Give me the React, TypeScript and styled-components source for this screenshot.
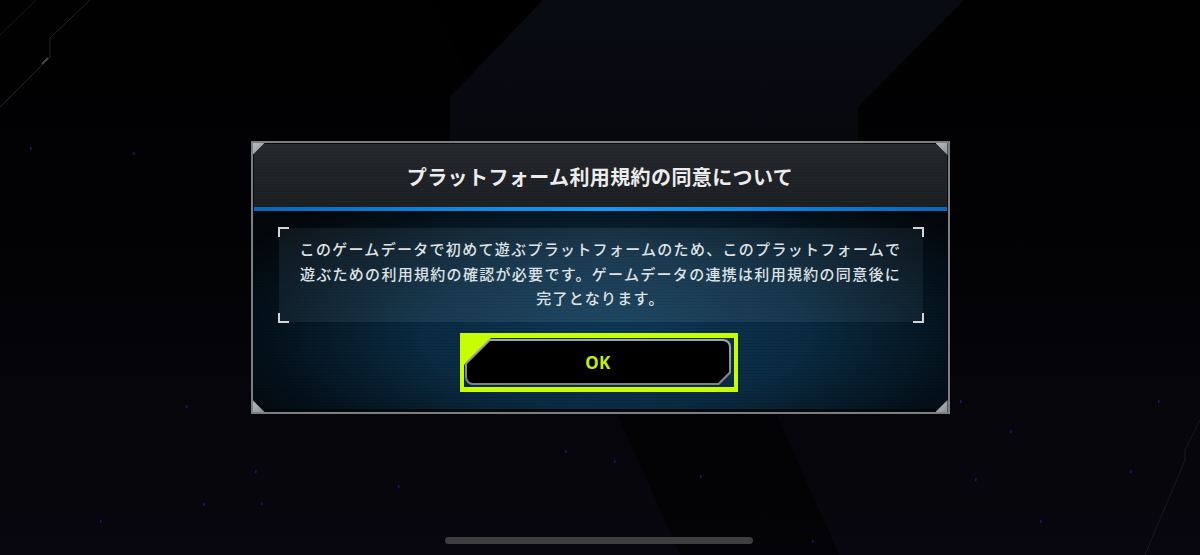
import React from 'react'
import styled, { createGlobalStyle } from 'styled-components'

const GlobalStyle = createGlobalStyle`
  html, body {
    margin: 0;
    padding: 0;
    background: #020203;
  }
  #root {
    width: 1200px;
    height: 555px;
  }
`

const Screen = styled.div`
  position: relative;
  width: 1200px;
  height: 555px;
  overflow: hidden;
  background:
    linear-gradient(66deg, transparent 0 47%, rgba(0, 0, 0, 0.55) 47% 58%, transparent 58% 100%),
    linear-gradient(180deg, #010102 0%, #020204 40%, #08070f 100%);
  display: flex;
  align-items: center;
  justify-content: center;
  font-family: 'Noto Sans CJK JP', 'Noto Sans', sans-serif;

  &::before {
    content: '';
    position: absolute;
    left: 0;
    top: 0;
    width: 1200px;
    height: 160px;
    background: linear-gradient(180deg, #090b12 0%, #07080e 100%);
    clip-path: polygon(543px 0, 964px 0, 858px 107px, 858px 160px, 450px 160px, 450px 97px);
  }
`

const Backdrop = styled.svg`
  position: absolute;
  inset: 0;
  pointer-events: none;
`

const Panel = styled.div`
  position: relative;
  z-index: 1;
  width: 695px;
  height: 269px;
  border: 2px solid #7c7f82;
  box-shadow: inset 0 0 0 1px #0a0b0c;
  display: flex;
  flex-direction: column;
  background: #02070b;
`

const Corner = styled.span<{ $v: 'top' | 'bottom'; $h: 'left' | 'right' }>`
  position: absolute;
  z-index: 3;
  width: 12px;
  height: 12px;
  ${(p) => p.$v}: 0;
  ${(p) => p.$h}: 0;
  background: linear-gradient(135deg, #b9bcbf, #8e9194);
  clip-path: ${(p) =>
    p.$v === 'top' && p.$h === 'left'
      ? 'polygon(0 0, 100% 0, 0 100%)'
      : p.$v === 'top'
      ? 'polygon(0 0, 100% 0, 100% 100%)'
      : p.$h === 'left'
      ? 'polygon(0 0, 100% 100%, 0 100%)'
      : 'polygon(100% 0, 100% 100%, 0 100%)'};
`

const Header = styled.div`
  height: 63px;
  margin: 1px 1px 0;
  display: flex;
  align-items: center;
  justify-content: center;
  background:
    repeating-linear-gradient(180deg, rgba(255, 255, 255, 0.015) 0 1px, transparent 1px 3px),
    linear-gradient(180deg, #24282c 0%, #1e2125 55%, #1b1e21 100%);
`

const Title = styled.h1`
  margin: 0;
  padding-top: 2px;
  font-size: 20px;
  font-weight: 700;
  letter-spacing: 0.4px;
  color: #ececec;
`

const BlueRule = styled.div`
  height: 4px;
  margin: 0 1px;
  background: linear-gradient(90deg, #0c66b4 0%, #1186dc 30%, #1b98ea 50%, #1186dc 70%, #0c66b4 100%);
`

const Body = styled.div`
  flex: 1;
  margin: 0 1px 3px;
  padding: 17px 24px 0 25px;
  display: flex;
  flex-direction: column;
  align-items: center;
  gap: 11px;
  background:
    repeating-linear-gradient(180deg, rgba(0, 0, 0, 0.12) 0 1px, transparent 1px 3px),
    radial-gradient(ellipse 62% 85% at 52% 62%, #0e3a58 0%, #0a2b42 45%, #04121c 80%, #02070b 100%);
`

const MessageBox = styled.div`
  position: relative;
  align-self: stretch;
  height: 94px;
  display: flex;
  align-items: center;
  justify-content: center;
  background: linear-gradient(90deg, rgba(140, 170, 190, 0.09), rgba(150, 180, 200, 0.13) 50%, rgba(140, 170, 190, 0.08));
`

const Bracket = styled.span<{ $v: 'top' | 'bottom'; $h: 'left' | 'right' }>`
  position: absolute;
  width: 9px;
  height: 8px;
  ${(p) => p.$v}: -1px;
  ${(p) => p.$h}: -1px;
  border-${(p) => p.$v}: 2px solid #d2d4d6;
  border-${(p) => p.$h}: 2px solid #d2d4d6;
`

const Message = styled.p`
  margin: 0;
  padding-bottom: 2px;
  text-align: center;
  font-size: 15px;
  line-height: 24.5px;
  letter-spacing: 1.3px;
  font-weight: 500;
  color: #dfe3e6;
`

const Focus = styled.div`
  position: relative;
  width: 268px;
  height: 48px;
  padding: 1px 1px 0 1px;
  border: 4px solid #c8ff00;
  border-top-width: 5px;
  border-bottom-width: 5px;
  margin-left: -3px;

  &::before {
    content: '';
    position: absolute;
    left: 0;
    top: 0;
    width: 27px;
    height: 27px;
    background: #c8ff00;
    clip-path: polygon(0 0, 100% 0, 0 100%);
  }
`

const OkButton = styled.button`
  position: relative;
  z-index: 1;
  width: 266px;
  height: 46px;
  padding: 0;
  border: none;
  border-radius: 8px;
  background: linear-gradient(180deg, #a4a8ac, #7d8185);
  clip-path: polygon(24px 0, 100% 0, 100% calc(100% - 12px), calc(100% - 12px) 100%, 0 100%, 0 24px);
  display: flex;
  align-items: center;
  justify-content: center;
  cursor: pointer;

  &::before {
    content: '';
    position: absolute;
    inset: 2px;
    border-radius: 6px;
    background: #000;
    clip-path: polygon(23px 0, 100% 0, 100% calc(100% - 11px), calc(100% - 11px) 100%, 0 100%, 0 23px);
  }
`

const OkLabel = styled.span`
  position: relative;
  font-family: 'Noto Sans', 'Liberation Sans', sans-serif;
  font-size: 17px;
  font-weight: 700;
  letter-spacing: 0.5px;
  color: #c4ee00;
`

const HomeIndicator = styled.div`
  position: absolute;
  left: 445px;
  bottom: 11px;
  width: 308px;
  height: 7px;
  border-radius: 4px;
  background: #3e3e40;
`

const stars: [number, number][] = [
  [30, 147], [133, 152], [186, 405], [203, 503], [261, 502], [398, 485], [565, 450],
  [614, 460], [700, 475], [812, 540], [960, 400], [975, 478], [1130, 470], [1158, 400],
  [100, 520], [1040, 520], [255, 470], [1010, 430],
]

export default function App() {
  return (
    <>
      <GlobalStyle />
      <Screen>
        <Backdrop width="1200" height="555" viewBox="0 0 1200 555">
          <polyline points="0,107 50,57 50,38 90,0" fill="none" stroke="#232427" strokeWidth="1" />
          <polyline points="0,35 36,0" fill="none" stroke="#18191c" strokeWidth="1" />
          <line x1="42" y1="64" x2="48" y2="58" stroke="#46484b" strokeWidth="2" />
          <polyline points="1145,555 1185,460 1185,450 1200,420" fill="none" stroke="#1a1b1f" strokeWidth="1" />
          {stars.map(([x, y], i) => (
            <rect key={i} x={x} y={y} width="1.5" height="3" fill="#24198a" opacity="0.8" />
          ))}
        </Backdrop>
        <Panel>
          <Corner $v="top" $h="left" />
          <Corner $v="top" $h="right" />
          <Corner $v="bottom" $h="left" />
          <Corner $v="bottom" $h="right" />
          <Header>
            <Title>プラットフォーム利用規約の同意について</Title>
          </Header>
          <BlueRule />
          <Body>
            <MessageBox>
              <Bracket $v="top" $h="left" />
              <Bracket $v="top" $h="right" />
              <Bracket $v="bottom" $h="left" />
              <Bracket $v="bottom" $h="right" />
              <Message>
                このゲームデータで初めて遊ぶプラットフォームのため、このプラットフォームで
                <br />
                遊ぶための利用規約の確認が必要です。ゲームデータの連携は利用規約の同意後に
                <br />
                完了となります。
              </Message>
            </MessageBox>
            <Focus>
              <OkButton>
                <OkLabel>OK</OkLabel>
              </OkButton>
            </Focus>
          </Body>
        </Panel>
        <HomeIndicator />
      </Screen>
    </>
  )
}
